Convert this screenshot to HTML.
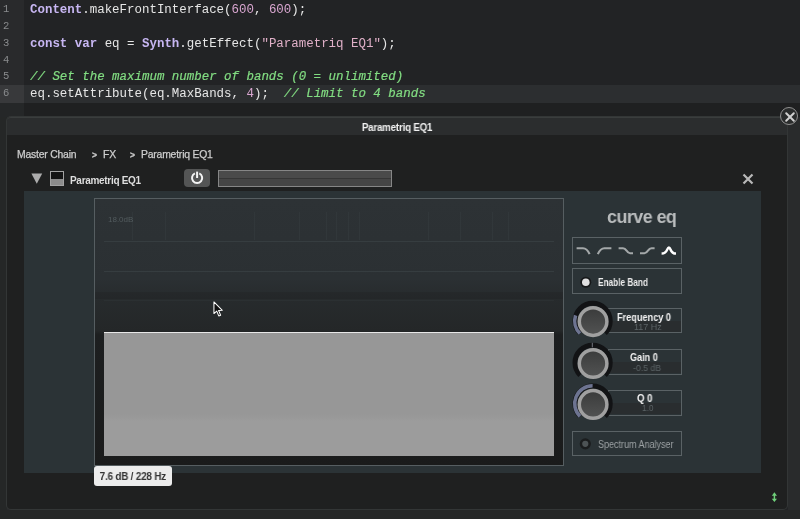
<!DOCTYPE html>
<html>
<head>
<meta charset="utf-8">
<title>Parametriq EQ1</title>
<style>
html,body{margin:0;padding:0;}
body{width:800px;height:519px;overflow:hidden;background:#222325;position:relative;font-family:"Liberation Sans",sans-serif;}
.abs{position:absolute;}
.code,.ln,.crumb,#title,#hdrname,#tip,#db,#ceq{will-change:transform;}
/* code editor */
#editor{left:0;top:0;width:800px;height:519px;background:#222325;}
#hl{left:0;top:85px;width:800px;height:18px;background:#2c2e30;}
.ln{left:3px;margin-top:-0.8px;width:10px;font-family:"Liberation Mono",monospace;font-size:10.5px;color:#8a8c8e;line-height:17px;height:17px;}
.code{left:30px;font-family:"Liberation Mono",monospace;font-size:12.45px;color:#e6e6e6;line-height:17px;height:17px;white-space:pre;}
.k{color:#c7b6f2;font-weight:bold;}
.n{color:#d9a6d0;}
.s{color:#e0b0c8;}
.c{color:#82dc82;font-style:italic;-webkit-text-stroke:0.2px #82dc82;}
/* popup */
#popup{left:7px;top:117px;width:780px;height:392px;background:#1f2020;border-radius:4px;box-shadow:0 0 0 1px #333636;}
#titlebar{left:0;top:0;width:780px;height:18px;background:#2b2d2e;border-radius:4px 4px 0 0;border-top:1px solid #3a3d3d;box-sizing:border-box;}
#title{left:0;top:4.5px;width:780px;text-align:center;transform:scaleX(0.975);font-size:10px;font-weight:bold;color:#f2f2f2;letter-spacing:-0.2px;}
.crumb{top:149px;line-height:12px;font-size:10.4px;color:#cdcdcd;letter-spacing:-0.2px;-webkit-text-stroke:0.25px #cdcdcd;}
.gt{font-size:8.5px;font-weight:bold;position:relative;top:-0.3px}
#close{left:779.8px;top:107.3px;width:18px;height:18px;border-radius:50%;background:#2a2c2c;border:1px solid #909090;box-sizing:border-box;}
/* module header */
#hdrname{left:70px;top:175px;font-size:10px;font-weight:bold;color:#dedede;letter-spacing:-0.3px;}
#power{left:184px;top:169.3px;width:26px;height:17.5px;background:#545555;border-radius:4px;}
#meter{left:218px;top:169.6px;width:174px;height:17.6px;background:linear-gradient(#4a4a4a 0,#4a4a4a 44%,#363636 47%,#363636 53%,#454545 56%,#454545 100%);border:1px solid #868686;box-sizing:border-box;}
/* teal panel */
#panel{left:24px;top:190.6px;width:737px;height:282.3px;background:#2b3336;}
#graph{left:94px;top:198px;width:470px;height:268px;border:1px solid #565e61;box-sizing:border-box;background:linear-gradient(#2d3235 0%,#2b3033 30%,#272b2d 37%,#242728 49.5%,#1d1f20 51%,#1a1b1b 100%);}
#grey{left:104px;top:331.5px;width:450.3px;height:124px;background:linear-gradient(#979797 0%,#979797 66%,#9c9c9c 72%,#9c9c9c 100%);border-top:1px solid #e8e8e8;box-sizing:border-box;}
.gl{left:104px;width:450px;height:1px;background:#363d40;}
.vl{top:212px;width:1px;height:28px;background:#31373a;}
#db{left:108px;top:215px;font-size:8px;color:#525b5e;}
#tip{left:94.4px;top:465.6px;width:77.6px;height:20px;background:#ececec;border-radius:3px;}
#tip span{position:absolute;left:0;top:0;width:100%;font-size:10.5px;font-weight:bold;color:#333;text-align:center;line-height:20px;letter-spacing:-0.2px;transform:scaleX(0.94);will-change:transform;}
/* right controls */
#ceq{left:607px;top:206px;font-size:19px;font-weight:bold;color:#b9bcbd;letter-spacing:-0.6px;white-space:nowrap;transform-origin:left center;transform:scaleX(0.945);}
.box{border:1px solid #5a6265;box-sizing:border-box;}
#types{left:572px;top:237px;width:110px;height:26.5px;}
#enable{left:572px;top:268px;width:110px;height:25.5px;}
#enable span,#spec span{position:absolute;left:25px;top:6px;font-size:10px;font-weight:bold;color:#e8e8e8;letter-spacing:-0.3px;white-space:nowrap;}
#spec{left:572px;top:431px;width:110px;height:25px;}
#spec span{font-weight:normal;color:#9a9fa1;}
.kbox{left:608px;width:74px;height:25px;}
.kbox div{position:absolute;left:0;top:11.5px;width:72px;height:11.5px;background:#292d2f;}
.t{will-change:transform;white-space:nowrap;line-height:12px;height:12px;transform-origin:left center;letter-spacing:0;}
.kbox b{position:absolute;left:0;top:1px;width:76px;text-align:center;font-size:10px;color:#f0f0f0;letter-spacing:-0.3px;}
.kbox i{position:absolute;left:0;top:12px;width:76px;text-align:center;font-size:9px;font-style:normal;color:#5d6567;}
.knob{width:40px;height:40px;}
</style>
</head>
<body>
<div id="editor" class="abs"></div>
<div class="abs" style="left:0;top:0;width:24px;height:519px;background:#292a2c"></div>
<div id="hl" class="abs"></div>
<div class="abs" style="left:0;top:85px;width:24px;height:18px;background:#38393b"></div>

<div class="abs ln" style="top:2px">1</div>
<div class="abs ln" style="top:18.8px">2</div>
<div class="abs ln" style="top:35.6px">3</div>
<div class="abs ln" style="top:52.4px">4</div>
<div class="abs ln" style="top:69.2px">5</div>
<div class="abs ln" style="top:86px">6</div>

<div class="abs code" style="top:2px"><span class="k">Content</span>.makeFrontInterface(<span class="n">600</span>, <span class="n">600</span>);</div>
<div class="abs code" style="top:35.6px"><span class="k">const var</span> eq = <span class="k">Synth</span>.getEffect(<span class="s">"Parametriq EQ1"</span>);</div>
<div class="abs code c" style="top:69.2px">// Set the maximum number of bands (0 = unlimited)</div>
<div class="abs code" style="top:86px">eq.setAttribute(eq.MaxBands, <span class="n">4</span>);  <span class="c">// Limit to 4 bands</span></div>

<div class="abs" style="left:0;top:103px;width:800px;height:14px;background:#1f2021"></div>
<div class="abs" style="left:0;top:103px;width:24px;height:14px;background:#252728"></div>
<div class="abs" style="left:788px;top:117px;width:12px;height:402px;background:#292b2c"></div>
<div class="abs" style="left:0;top:510px;width:800px;height:9px;background:#252727"></div>
<div class="abs" style="left:0;top:117px;width:7px;height:402px;background:#252727"></div>
<!-- popup -->
<div id="popup" class="abs">
  <div id="titlebar" class="abs"></div>
  <div id="title" class="abs">Parametriq EQ1</div>
</div>
<div id="close" class="abs box-sizing">
  <svg width="18" height="18" viewBox="0 0 18 18" style="position:absolute;left:0;top:0"><path d="M5.2 5.2 L12.8 12.8 M12.8 5.2 L5.2 12.8" stroke="#d0d0d0" stroke-width="2" stroke-linecap="round"/></svg>
</div>

<div class="abs crumb" style="left:17px">Master Chain</div>
<div class="abs crumb" style="left:91.5px"><span class="gt">&gt;</span></div><div class="abs crumb" style="left:102.6px">FX</div>
<div class="abs crumb" style="left:130px"><span class="gt">&gt;</span></div><div class="abs crumb" style="left:140.6px">Parametriq EQ1</div>

<!-- module header -->
<svg class="abs" style="left:31px;top:173px" width="12" height="12" viewBox="0 0 12 12"><path d="M0.4 0.4 L11.2 0.4 L5.8 10.8 Z" fill="#acacac"/></svg>
<div class="abs" style="left:49.5px;top:171px;width:14px;height:14.5px;background:#8c8c8c;border:1px solid #a2a2a2;box-sizing:border-box;"><div style="height:6.5px;background:#141414"></div></div>
<div id="hdrname" class="abs">Parametriq EQ1</div>
<div id="power" class="abs">
  <svg width="26" height="18" viewBox="0 0 26 18"><path d="M10.9 4.4 A5.1 5.1 0 1 0 15.3 4.4" fill="none" stroke="#f4f4f4" stroke-width="2" stroke-linecap="butt"/><path d="M13.1 2.6 L13.1 9" stroke="#f4f4f4" stroke-width="2" stroke-linecap="butt"/></svg>
</div>
<div id="meter" class="abs"></div>
<svg class="abs" style="left:742px;top:172.8px" width="12" height="12" viewBox="0 0 12 12"><path d="M1.5 1.5 L10.5 10.5 M10.5 1.5 L1.5 10.5" stroke="#b8b8b8" stroke-width="2.2"/></svg>

<!-- panel -->
<div id="panel" class="abs"></div>
<div id="graph" class="abs"></div>
<div class="abs gl" style="top:241px"></div>
<div class="abs gl" style="top:271px"></div>
<div class="abs gl" style="top:300px;background:#2b3032"></div>
<div class="abs" style="left:95px;top:292px;width:468px;height:7px;background:rgba(0,0,0,0.07)"></div>
<div class="abs vl" style="left:132px"></div><div class="abs vl" style="left:165px"></div><div class="abs vl" style="left:254px"></div><div class="abs vl" style="left:299px"></div><div class="abs vl" style="left:326px"></div><div class="abs vl" style="left:336px"></div><div class="abs vl" style="left:348px"></div><div class="abs vl" style="left:359px"></div><div class="abs vl" style="left:428px"></div><div class="abs vl" style="left:460px"></div><div class="abs vl" style="left:492px"></div><div class="abs vl" style="left:508px"></div>
<div id="db" class="abs">18.0dB</div>
<div id="grey" class="abs"></div>
<div id="tip" class="abs"><span>7.6 dB / 228 Hz</span></div>

<!-- cursor -->
<svg class="abs" style="left:213.2px;top:300.6px" width="11.2" height="16.8" viewBox="0 0 12 18"><path d="M1 1 L1 13.5 L4 10.8 L6.2 16 L8.2 15.2 L6 10.2 L10 10 Z" fill="#111" stroke="#fff" stroke-width="1.1" stroke-linejoin="round"/></svg>

<!-- right controls -->
<div id="ceq" class="abs">curve eq</div>
<div id="types" class="abs box">
  <svg width="108" height="25" viewBox="0 0 108 25" style="position:absolute;left:0;top:0" fill="none" stroke="#a4a8a9" stroke-width="2.1" stroke-linecap="butt" stroke-linejoin="round">
    <path d="M3.6 10.2 L10 10.2 Q14 10.2 16.6 16.2"/>
    <path d="M24.8 16.2 Q27.4 10.2 31.4 10.2 L38.4 10.2"/>
    <path d="M45.6 10.2 L50 10.2 Q52 10.2 53.5 12.6 Q55 15.2 57 15.2 L60 15.2"/>
    <path d="M67 15.2 L71.5 15.2 Q73.5 15.2 75 12.6 Q76.5 10.2 78.5 10.2 L81.6 10.2"/>
    <path d="M88.6 15.6 Q92.6 15.6 94.3 11.4 Q95.9 7.6 97.5 11.4 Q99.2 15.6 103 15.6" stroke="#ffffff" stroke-width="2.5"/>
  </svg>
</div>
<div id="enable" class="abs box"></div>
<svg class="abs" style="left:578px;top:274px" width="16" height="16" viewBox="0 0 16 16"><circle cx="7.8" cy="8.25" r="5.5" fill="#17191a"/><circle cx="7.8" cy="8.25" r="3.8" fill="#e0e0e0"/></svg>
<span class="abs t" style="left:598px;top:277.0px;font-size:10px;font-weight:bold;color:#ececec;transform:scaleX(0.825);">Enable Band</span>
<div class="abs box kbox" style="top:308px"><div></div></div>
<span class="abs t" style="left:617.3px;top:311.6px;font-size:10px;font-weight:bold;color:#f2f2f2;transform:scaleX(0.917);">Frequency 0</span>
<span class="abs t" style="left:633.7px;top:320.8px;font-size:9px;font-weight:normal;color:#5b6366;transform:scaleX(1.0);">117 Hz</span>
<div class="abs box kbox" style="top:349px;height:26px"><div></div></div>
<span class="abs t" style="left:630.3px;top:352.3px;font-size:10px;font-weight:bold;color:#f2f2f2;transform:scaleX(0.91);">Gain 0</span>
<span class="abs t" style="left:633px;top:361.7px;font-size:9px;font-weight:normal;color:#5b6366;transform:scaleX(0.97);">-0.5 dB</span>
<div class="abs box kbox" style="top:390px;height:26px"><div></div></div>
<span class="abs t" style="left:636.7px;top:393.2px;font-size:10px;font-weight:bold;color:#f2f2f2;transform:scaleX(0.96);">Q 0</span>
<span class="abs t" style="left:641.7px;top:402.2px;font-size:9px;font-weight:normal;color:#5b6366;transform:scaleX(0.92);">1.0</span>
<svg class="abs" style="left:0;top:0" width="800" height="519" viewBox="0 0 800 519" fill="none"><path d="M580.15 333.35 A17.60 17.60 0 1 1 605.05 333.35" stroke="#121315" stroke-width="5"/><path d="M579.94 333.56 A17.90 17.90 0 0 1 575.58 315.37" stroke="#6d7491" stroke-width="3.6"/><defs><linearGradient id="kg320" x1="0" y1="0" x2="0" y2="1"><stop offset="0" stop-color="#3a3b3b"/><stop offset="1" stop-color="#525353"/></linearGradient></defs><circle cx="593.10" cy="321.60" r="13.8" fill="url(#kg320)" stroke="#a0a0a0" stroke-width="3.5"/></svg>
<svg class="abs" style="left:0;top:1px" width="800" height="519" viewBox="0 0 800 519" fill="none"><path d="M580.15 374.25 A17.60 17.60 0 1 1 605.05 374.25" stroke="#121315" stroke-width="5"/><path d="M592.30 341.80 L592.30 346.30" stroke="#8a8f9a" stroke-width="0.8"/><defs><linearGradient id="kg361" x1="0" y1="0" x2="0" y2="1"><stop offset="0" stop-color="#3a3b3b"/><stop offset="1" stop-color="#525353"/></linearGradient></defs><circle cx="593.10" cy="362.50" r="13.8" fill="url(#kg361)" stroke="#a0a0a0" stroke-width="3.5"/></svg>
<svg class="abs" style="left:0;top:0.6px" width="800" height="519" viewBox="0 0 800 519" fill="none"><path d="M580.15 415.15 A17.60 17.60 0 1 1 605.05 415.15" stroke="#121315" stroke-width="5"/><path d="M579.94 415.36 A17.90 17.90 0 0 1 592.60 384.80" stroke="#6d7491" stroke-width="3.6"/><defs><linearGradient id="kg402" x1="0" y1="0" x2="0" y2="1"><stop offset="0" stop-color="#3a3b3b"/><stop offset="1" stop-color="#525353"/></linearGradient></defs><circle cx="593.10" cy="403.40" r="13.8" fill="url(#kg402)" stroke="#a0a0a0" stroke-width="3.5"/></svg>
<div id="spec" class="abs box"></div>
<svg class="abs" style="left:577px;top:436px" width="16" height="16" viewBox="0 0 16 16"><circle cx="8.3" cy="7.85" r="5.6" fill="#1b1d1e"/><circle cx="8.3" cy="7.85" r="3.1" fill="#4d5355"/></svg>
<span class="abs t" style="left:598px;top:438.6px;font-size:10px;font-weight:normal;color:#9da2a4;transform:scaleX(0.9);">Spectrum Analyser</span>

<!-- resize icon -->
<svg class="abs" style="left:770.6px;top:491.6px" width="6.8" height="10.4" viewBox="0 0 8 14"><path d="M4 0.5 L7.5 5 L5 5 L5 9 L7.5 9 L4 13.5 L0.5 9 L3 9 L3 5 L0.5 5 Z" fill="#6fd07a"/></svg>
</body>
</html>
